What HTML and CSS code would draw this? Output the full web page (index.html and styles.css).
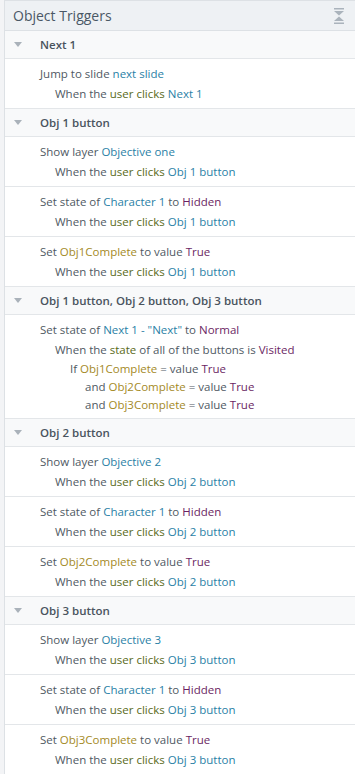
FILE: index.html
```html
<!DOCTYPE html>
<html lang="en">
<head>
    <meta charset="UTF-8">
    <title>Object Triggers</title>
    <link rel="stylesheet" href="styles.css">
</head>
<body>
<div class="panel">
    <div class="panel-head">
        <span>Object Triggers</span>
        <svg class="collapse" width="12" height="16" viewBox="0 0 12 16">
            <rect x="1" y="0" width="10" height="1.5" fill="#aab3bc"/>
            <polygon points="1,3 11,3 6,7.5" fill="#aab3bc"/>
            <polygon points="1,13 11,13 6,8.5" fill="#aab3bc"/>
            <rect x="1" y="14.5" width="10" height="1.5" fill="#aab3bc"/>
        </svg>
    </div>

    <div class="group"><span class="arrow"></span>Next 1</div>
    <div class="item">
        <div>Jump to slide <span class="obj">next slide</span></div>
        <div class="l2">When the <span class="ev">user clicks</span> <span class="obj">Next 1</span></div>
    </div>

    <div class="group"><span class="arrow"></span>Obj 1 button</div>
    <div class="item">
        <div>Show layer <span class="obj">Objective one</span></div>
        <div class="l2">When the <span class="ev">user clicks</span> <span class="obj">Obj 1 button</span></div>
    </div>
    <div class="item">
        <div>Set state of <span class="obj">Character 1</span> to <span class="val">Hidden</span></div>
        <div class="l2">When the <span class="ev">user clicks</span> <span class="obj">Obj 1 button</span></div>
    </div>
    <div class="item">
        <div>Set <span class="var">Obj1Complete</span> to value <span class="val">True</span></div>
        <div class="l2">When the <span class="ev">user clicks</span> <span class="obj">Obj 1 button</span></div>
    </div>

    <div class="group"><span class="arrow"></span>Obj 1 button, Obj 2 button, Obj 3 button</div>
    <div class="item">
        <div>Set state of <span class="obj">Next 1 - "Next"</span> to <span class="val">Normal</span></div>
        <div class="l2">When the <span class="ev">state</span> of all of the buttons is <span class="val">Visited</span></div>
        <div class="l3">If <span class="var">Obj1Complete</span> = value <span class="val">True</span></div>
        <div class="l4">and <span class="var">Obj2Complete</span> = value <span class="val">True</span></div>
        <div class="l4">and <span class="var">Obj3Complete</span> = value <span class="val">True</span></div>
    </div>

    <div class="group"><span class="arrow"></span>Obj 2 button</div>
    <div class="item">
        <div>Show layer <span class="obj">Objective 2</span></div>
        <div class="l2">When the <span class="ev">user clicks</span> <span class="obj">Obj 2 button</span></div>
    </div>
    <div class="item">
        <div>Set state of <span class="obj">Character 1</span> to <span class="val">Hidden</span></div>
        <div class="l2">When the <span class="ev">user clicks</span> <span class="obj">Obj 2 button</span></div>
    </div>
    <div class="item">
        <div>Set <span class="var">Obj2Complete</span> to value <span class="val">True</span></div>
        <div class="l2">When the <span class="ev">user clicks</span> <span class="obj">Obj 2 button</span></div>
    </div>

    <div class="group"><span class="arrow"></span>Obj 3 button</div>
    <div class="item">
        <div>Show layer <span class="obj">Objective 3</span></div>
        <div class="l2">When the <span class="ev">user clicks</span> <span class="obj">Obj 3 button</span></div>
    </div>
    <div class="item">
        <div>Set state of <span class="obj">Character 1</span> to <span class="val">Hidden</span></div>
        <div class="l2">When the <span class="ev">user clicks</span> <span class="obj">Obj 3 button</span></div>
    </div>
    <div class="item">
        <div>Set <span class="var">Obj3Complete</span> to value <span class="val">True</span></div>
        <div class="l2">When the <span class="ev">user clicks</span> <span class="obj">Obj 3 button</span></div>
    </div>
</div>
</body>
</html>
```
FILE: styles.css
```css
body {
    margin: 0;
    background: #f3f4f6;
    font-family: "Open Sans", "Noto Sans", sans-serif;
    font-size: 11.5px;
    color: #4f5963;
}
.panel {
    margin-left: 4px;
    border-left: 1px solid #dde1e5;
    border-top: 1px solid #dde1e5;
    background: #fff;
    min-height: 773px;
}
.panel-head {
    display: flex;
    align-items: center;
    justify-content: space-between;
    height: 29px;
    padding: 0 10px 0 8px;
    background: #eef1f4;
    border-bottom: 1px solid #dde1e5;
    font-size: 14px;
    color: #4a5866;
}
.collapse {
    margin-top: 1px;
}
.group {
    display: flex;
    align-items: center;
    height: 27px;
    background: #f8f9fa;
    border-bottom: 1px solid #e3e6e9;
    font-weight: 600;
    color: #4a545e;
}
.arrow {
    width: 0;
    height: 0;
    margin: 0 18px 0 9px;
    border-left: 4px solid transparent;
    border-right: 4px solid transparent;
    border-top: 5px solid #aab2ba;
}
.item {
    padding: 5px 0 4px 35px;
    border-bottom: 1px solid #e3e6e9;
    line-height: 20px;
}
.item .l2 {
    padding-left: 15px;
}
.item .l3 {
    padding-left: 30px;
    line-height: 18px;
}
.item .l4 {
    padding-left: 45px;
    line-height: 18px;
}
.obj {
    color: #2a7fa6;
}
.ev {
    color: #5a6a18;
}
.var {
    color: #a48a1f;
}
.val {
    color: #6b1f63;
}
```
